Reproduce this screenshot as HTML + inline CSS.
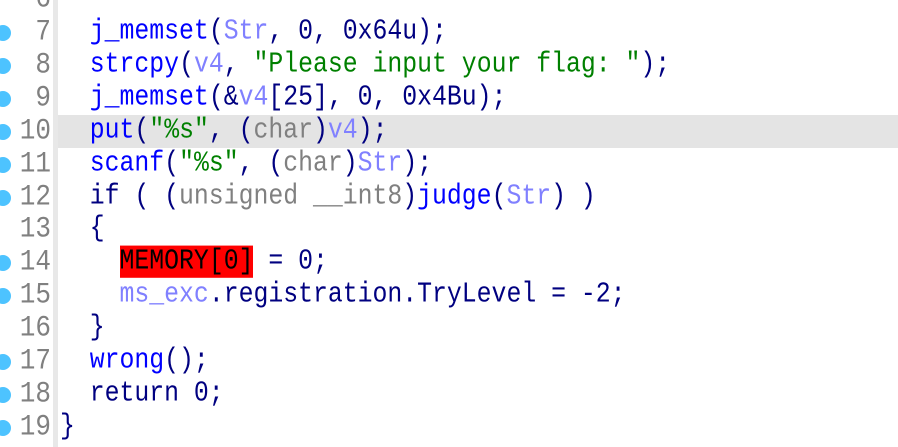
<!DOCTYPE html>
<html><head><meta charset="utf-8"><style>
html,body{margin:0;padding:0;background:#fff;width:898px;height:447px;overflow:hidden}
.row{position:absolute;left:0;width:898px;height:32.9px;font-family:"Liberation Mono",monospace;font-size:24.8px;line-height:32.9px;white-space:pre;color:#000080}
.hl{background:#e4e4e4}
.num{position:absolute;right:847px;color:#808080;text-align:right;transform:scaleY(1.15);transform-origin:50% 55%;font-size:26px}
.code{position:absolute;left:60px;transform:scaleY(1.15);transform-origin:0 55%}
.dot{position:absolute;left:-5px;top:9px;width:16px;height:16px;border-radius:50%;background:#4dc3ff}
.sep{position:absolute;left:53px;top:0;width:5px;height:447px;background:#e8e8e8}
.f{color:#0000ff}.v{color:#8080ff}.t{color:#808080}.s{color:#008000}
.m{background:#ff0000;color:#000}
</style></head><body>
<div class="sep"></div>
<div class="row" style="top:-16.9px"><span class="num">6</span></div>
<div class="row" style="top:16px"><span class="dot"></span><span class="num">7</span><span class="code">  <span class="f">j_memset</span>(<span class="v">Str</span>, 0, 0x64u);</span></div>
<div class="row" style="top:48.9px"><span class="dot"></span><span class="num">8</span><span class="code">  <span class="f">strcpy</span>(<span class="v">v4</span>, <span class="s">"Please input your flag: "</span>);</span></div>
<div class="row" style="top:81.8px"><span class="dot"></span><span class="num">9</span><span class="code">  <span class="f">j_memset</span>(&amp;<span class="v">v4</span>[25], 0, 0x4Bu);</span></div>
<div class="row" style="top:114.7px"><div class="hl" style="position:absolute;left:58px;right:0;top:0;bottom:0"></div><span class="dot"></span><span class="num">10</span><span class="code">  <span class="f">put</span>(<span class="s">"%s"</span>, (<span class="t">char</span>)<span class="v">v4</span>);</span></div>
<div class="row" style="top:147.6px"><span class="dot"></span><span class="num">11</span><span class="code">  <span class="f">scanf</span>(<span class="s">"%s"</span>, (<span class="t">char</span>)<span class="v">Str</span>);</span></div>
<div class="row" style="top:180.5px"><span class="dot"></span><span class="num">12</span><span class="code">  if ( (<span class="t">unsigned __int8</span>)<span class="f">judge</span>(<span class="v">Str</span>) )</span></div>
<div class="row" style="top:213.4px"><span class="num">13</span><span class="code">  {</span></div>
<div class="row" style="top:246.3px"><span class="dot"></span><span class="num">14</span><span class="code">    <span class="m">MEMORY[0]</span> = 0;</span></div>
<div class="row" style="top:279.2px"><span class="dot"></span><span class="num">15</span><span class="code">    <span class="v">ms_exc</span>.registration.TryLevel = -2;</span></div>
<div class="row" style="top:312.1px"><span class="num">16</span><span class="code">  }</span></div>
<div class="row" style="top:345px"><span class="dot"></span><span class="num">17</span><span class="code">  <span class="f">wrong</span>();</span></div>
<div class="row" style="top:377.9px"><span class="dot"></span><span class="num">18</span><span class="code">  return 0;</span></div>
<div class="row" style="top:410.8px"><span class="dot"></span><span class="num">19</span><span class="code">}</span></div>
</body></html>
